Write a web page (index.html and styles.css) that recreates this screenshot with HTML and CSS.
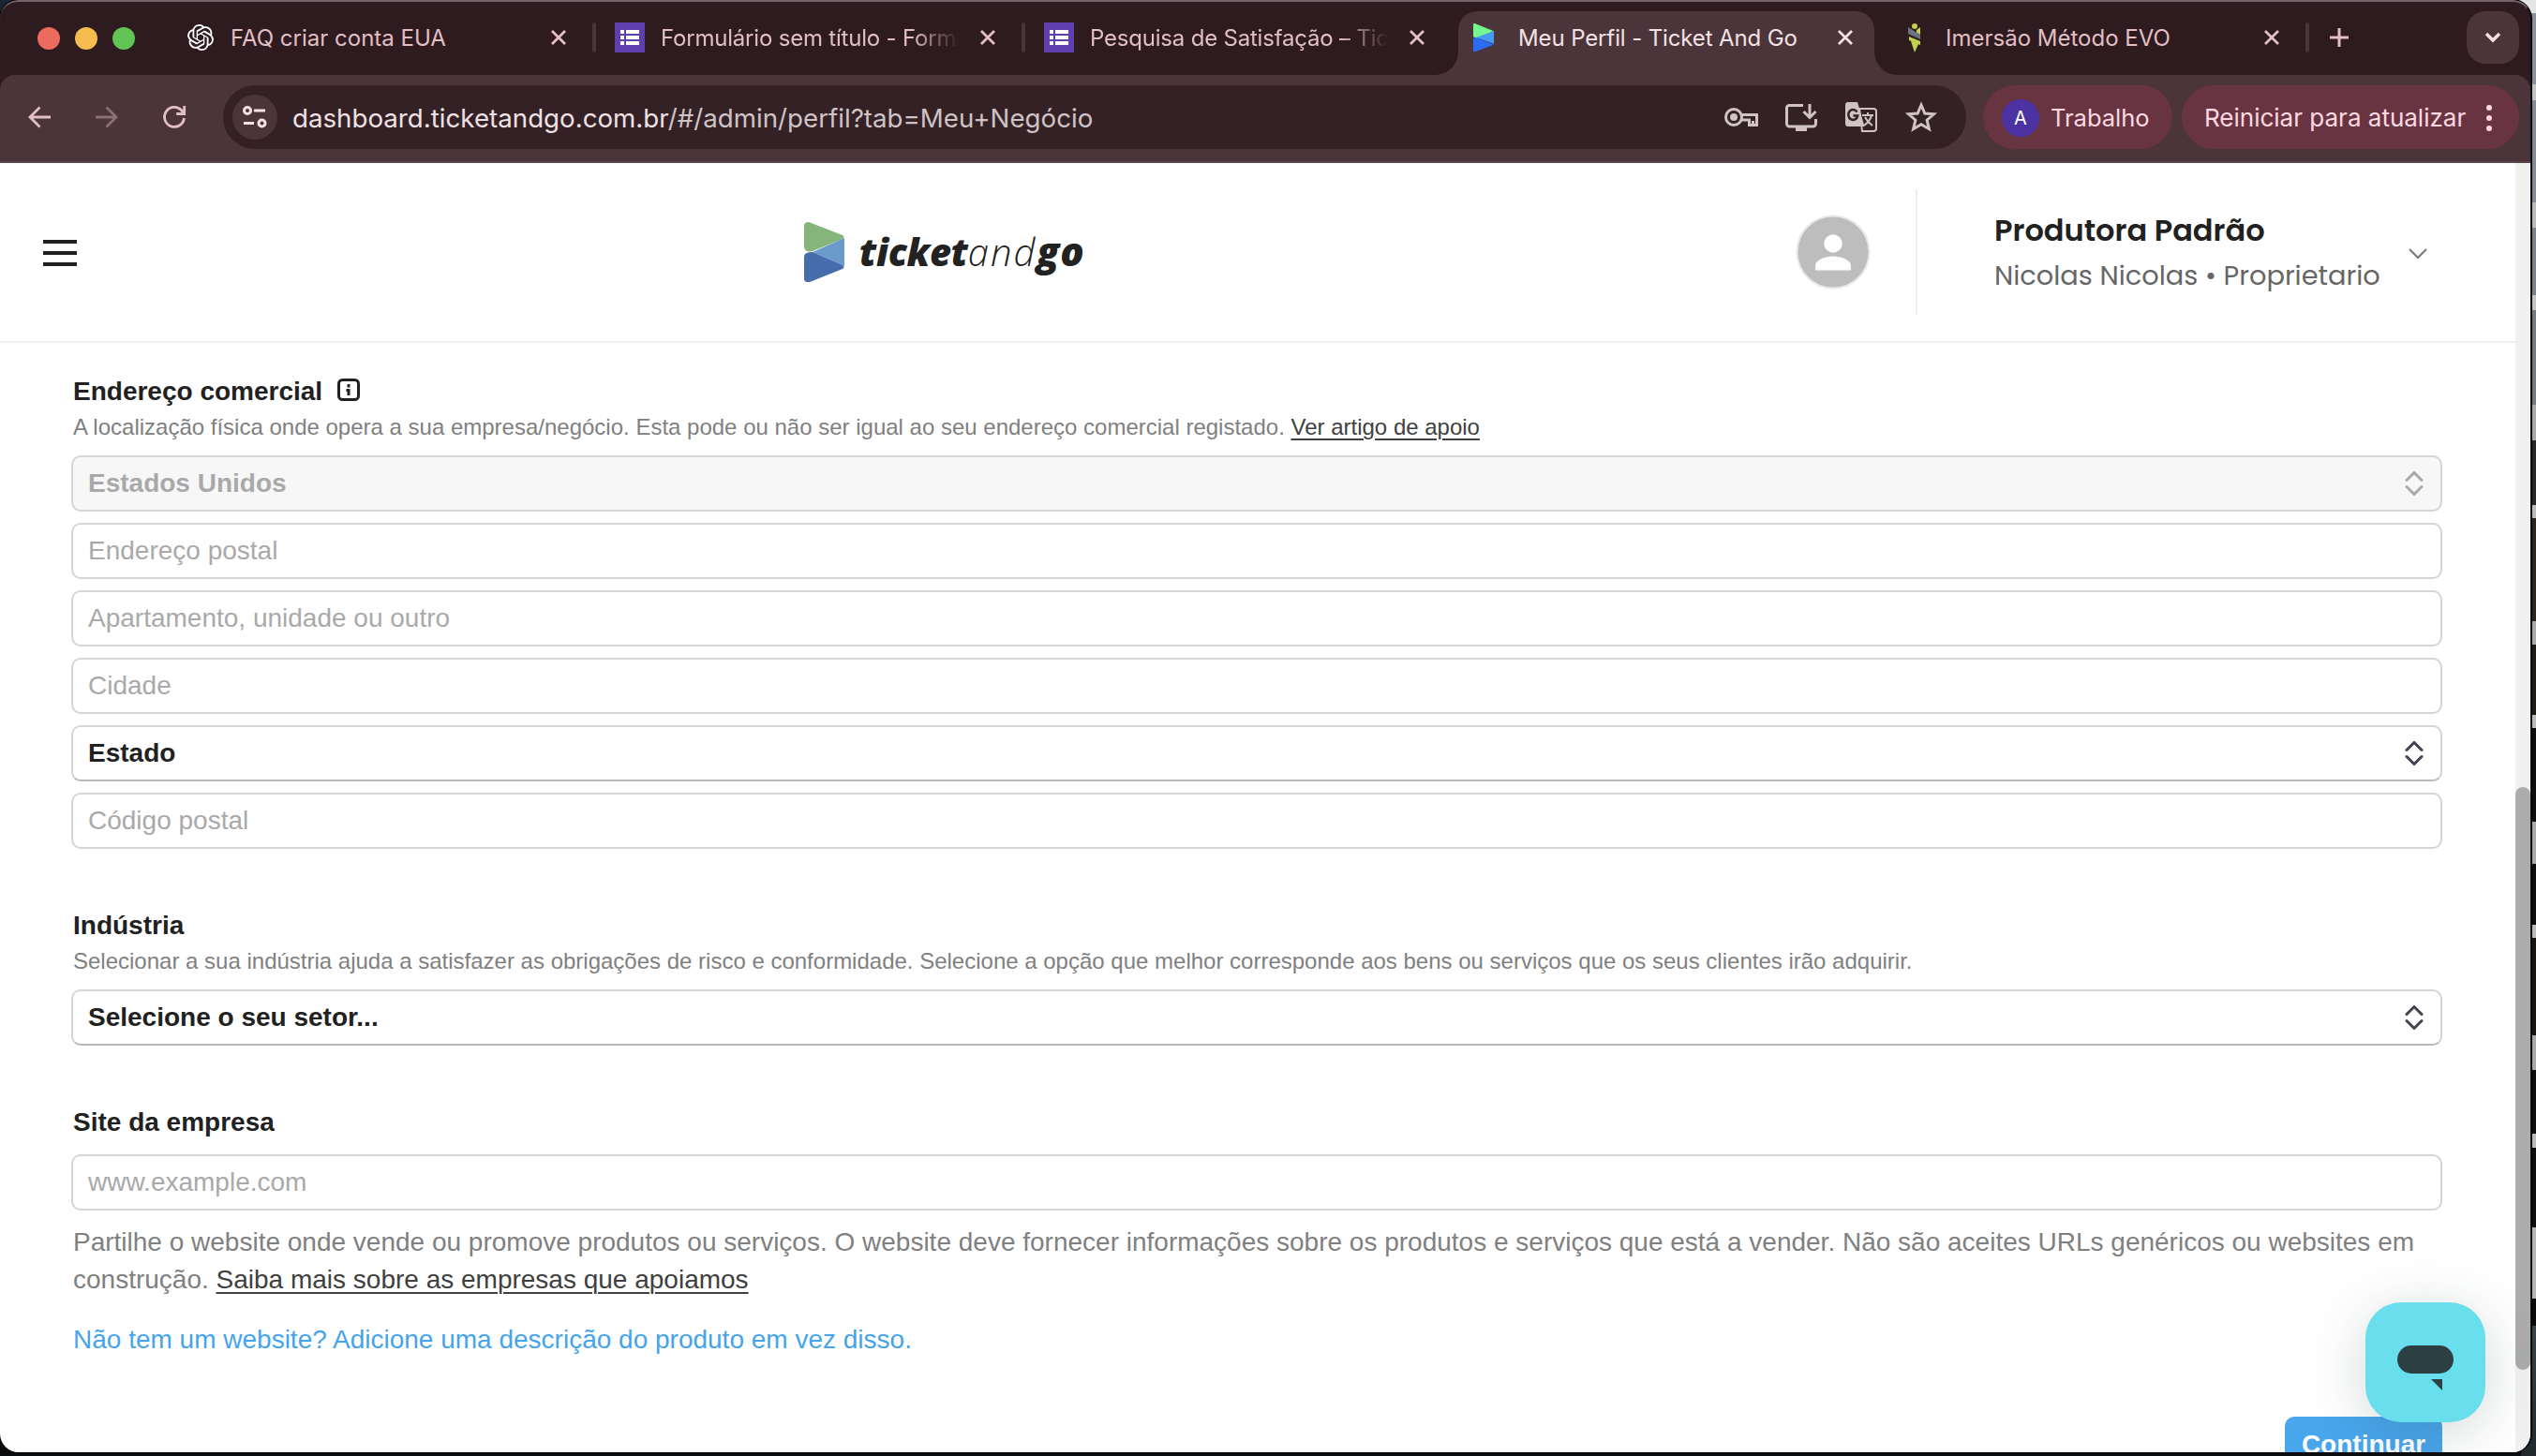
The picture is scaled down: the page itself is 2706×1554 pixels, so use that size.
FILE: index.html
```html
<!doctype html>
<html lang="pt-BR">
<head>
    <meta charset="UTF-8">
    <title>Meu Perfil - Ticket And Go</title>
    <link rel="stylesheet" href="styles.css">
</head>
<body>
<div class="window">
    <div class="tabs">
        <div class="lights"><i class="red"></i><i class="yellow"></i><i class="green"></i></div>
        <div class="tab first">
            <svg class="fav" viewBox="0 0 24 24"><path d="M22.28 9.82a5.98 5.98 0 0 0-.51-4.91 6.05 6.05 0 0 0-6.51-2.9A6.07 6.07 0 0 0 4.98 4.18a5.98 5.98 0 0 0-4 2.9 6.05 6.05 0 0 0 .74 7.1 5.98 5.98 0 0 0 .51 4.91 6.05 6.05 0 0 0 6.51 2.9A5.98 5.98 0 0 0 13.26 24a6.06 6.06 0 0 0 5.77-4.21 5.99 5.99 0 0 0 4-2.9 6.06 6.06 0 0 0-.75-7.07zm-9.02 12.61a4.48 4.48 0 0 1-2.88-1.04l.14-.08 4.78-2.76a.8.8 0 0 0 .39-.68v-6.74l2.02 1.17a.07.07 0 0 1 .04.05v5.58a4.5 4.5 0 0 1-4.49 4.5zM3.6 18.3a4.47 4.47 0 0 1-.54-3.01l.14.08 4.78 2.76a.77.77 0 0 0 .78 0l5.84-3.37v2.33a.08.08 0 0 1-.03.06L9.74 19.95a4.5 4.5 0 0 1-6.14-1.65zM2.34 7.9a4.49 4.49 0 0 1 2.37-1.98v5.68a.77.77 0 0 0 .39.68l5.81 3.35-2.02 1.17a.08.08 0 0 1-.07 0l-4.83-2.79A4.5 4.5 0 0 1 2.34 7.9zm16.6 3.86-5.84-3.39L15.12 7.2a.08.08 0 0 1 .07 0l4.83 2.79a4.49 4.49 0 0 1-.68 8.1v-5.68a.79.79 0 0 0-.4-.65zm2.01-3.03-.14-.08-4.77-2.78a.78.78 0 0 0-.79 0L9.41 9.23V6.9a.07.07 0 0 1 .03-.06l4.83-2.79a4.5 4.5 0 0 1 6.68 4.66zM8.31 12.86l-2.02-1.16a.08.08 0 0 1-.04-.06V6.07a4.5 4.5 0 0 1 7.38-3.45l-.14.08-4.78 2.76a.8.8 0 0 0-.39.68zm1.1-2.36 2.6-1.5 2.6 1.5v3l-2.6 1.5-2.6-1.5z"/></svg>
            <span class="title">FAQ criar conta EUA</span>
            <svg class="close" viewBox="0 0 18 18"><path d="M2 2l14 14M16 2L2 16"/></svg>
        </div>
        <i class="sep"></i>
        <div class="tab">
            <svg class="fav forms" viewBox="0 0 32 32"><path fill="#5f3fad" d="M0 0h32v32H0z"/><path fill="#fff" d="M6 8h4v4H6zM12 8h14v4H12zM6 14h4v4H6zM12 14h14v4H12zM6 20h4v4H6zM12 20h14v4H12z"/></svg>
            <span class="title fade">Formulário sem título - Form</span>
            <svg class="close" viewBox="0 0 18 18"><path d="M2 2l14 14M16 2L2 16"/></svg>
        </div>
        <i class="sep"></i>
        <div class="tab">
            <svg class="fav forms" viewBox="0 0 32 32"><path fill="#5f3fad" d="M0 0h32v32H0z"/><path fill="#fff" d="M6 8h4v4H6zM12 8h14v4H12zM6 14h4v4H6zM12 14h14v4H12zM6 20h4v4H6zM12 20h14v4H12z"/></svg>
            <span class="title fade">Pesquisa de Satisfação – Tic</span>
            <svg class="close" viewBox="0 0 18 18"><path d="M2 2l14 14M16 2L2 16"/></svg>
        </div>
        <div class="tab active">
            <svg class="fav ticket" viewBox="0 0 24 32"><path fill="#74f78e" d="M1 0l22 9L3 17 0 15V1z"/><path fill="#449bf4" d="M23 9v14L3 16z"/><path fill="#2a6df4" d="M3 16l20 8L2 32l-2-1V17z"/></svg>
            <span class="title">Meu Perfil - Ticket And Go</span>
            <svg class="close" viewBox="0 0 18 18"><path d="M2 2l14 14M16 2L2 16"/></svg>
        </div>
        <div class="tab last">
            <svg class="fav evo" viewBox="0 0 16 32"><circle cx="8" cy="4" r="3" fill="#c2d24b"/><path fill="#c2d24b" d="M2 15l12 5v4L2 19zM10 8l4-3v8l-4-2zM4 20l8 3-4 9z"/><path fill="#6e7180" d="M1 5l13 8v5L1 12z"/></svg>
            <span class="title">Imersão Método EVO</span>
            <svg class="close" viewBox="0 0 18 18"><path d="M2 2l14 14M16 2L2 16"/></svg>
        </div>
        <i class="sep"></i>
        <svg class="plus" viewBox="0 0 22 22"><path d="M11 1v20M1 11h20"/></svg>
        <div class="tab-search"><svg viewBox="0 0 18 12"><path d="M2 2l7 7 7-7"/></svg></div>
    </div>

    <div class="toolbar">
        <svg class="nav" viewBox="0 0 24 24"><path d="M24 12H2M12.500 1.500L2 12l10.500 10.500"/></svg>
        <svg class="nav off" viewBox="0 0 24 24"><path d="M0 12h22M11.500 1.500L22 12 11.500 22.500"/></svg>
        <svg class="nav" viewBox="0 0 24 24"><path d="M22.500 13A10.500 10.500 0 1 1 19.500 4.500L22 8M22.700 0v8.500h-8.500"/></svg>
        <div class="omnibox">
            <div class="site"><svg viewBox="0 0 26 24"><circle cx="5" cy="5" r="3.500"/><path d="M12 5h12M1 18.500h11"/><circle cx="20.500" cy="18.500" r="3.500"/></svg></div>
            <span class="url">dashboard.ticketandgo.com.br<em>/#/admin/perfil?tab=Meu+Negócio</em></span>
            <svg class="act" viewBox="0 0 36 36"><circle cx="10" cy="18" r="8.500"/><circle cx="10" cy="18" r="4" fill="#cfc3c5" stroke="none"/><path d="M18 15.500h16.500v11h-8V21h-8M30.500 27v-5"/></svg>
            <svg class="act" viewBox="0 0 36 36"><path d="M20 5.500H5.500A3 3 0 0 0 2.500 8v17a3 3 0 0 0 3 3h25a3 3 0 0 0 3-3v-5M27 4v14M20.500 12l6.500 6.500 6.500-6.500"/><path d="M12 28h12v5H12z" fill="#cfc3c5" stroke="none"/></svg>
            <svg class="act" viewBox="0 0 36 36"><path d="M16 9h15a3 3 0 0 1 3 3v18a3 3 0 0 1-3 3H19z" stroke-width="2"/><path d="M4 2h10l7.500 26H4a3 3 0 0 1-3-3V5a3 3 0 0 1 3-3z" fill="#cfc3c5" stroke="none"/><path d="M13.500 12.500a5 5.500 0 1 0 .7 4H9.500" stroke="#342125" stroke-width="2.500"/><path d="M19 16h12M25 13v3M29 16c-1 5-4 8-8 11M22 18c2 4 5 7 8 9" stroke-width="2"/></svg>
            <svg class="act" viewBox="0 0 36 36"><path d="M18 5l3.800 9 9.700.8-7.400 6.400 2.300 9.500L18 25.700l-8.400 5 2.300-9.500-7.400-6.400 9.700-.8z"/></svg>
        </div>
        <div class="pill profile"><b>A</b>Trabalho</div>
        <div class="pill update">Reiniciar para atualizar<span class="dots"><i></i><i></i><i></i></span></div>
    </div>

    <div class="page">
        <div class="content">
            <header class="header">
                <div class="burger"><i></i><i></i><i></i></div>
                <div class="logo">
                    <svg viewBox="0 0 43 64"><path fill="#85b57a" d="M5 0l36 14q3 2 0 4L9 31q-9 2-9-5V4q0-4 5-4z"/><path fill="#6a9bcb" d="M43 17v30L9 32z"/><path fill="#456cab" d="M9 32l32 14q3 2 0 4L6 64q-6 1-6-4V37q0-5 9-5z"/></svg>
                    <div class="brand"><b>ticket</b><span>and</span><b class="go">go</b></div>
                </div>
                <svg class="avatar" viewBox="0 0 80 80"><circle cx="40" cy="40" r="38.500" fill="#bdbdbd" stroke="#e8e8e8" stroke-width="2"/><circle cx="40" cy="31" r="9.700" fill="#fff"/><path fill="#fff" d="M21 59.500v-5c0-6 11-10 19-10s19 4 19 10v5z"/></svg>
                <div class="account">
                    <div class="who">
                        <strong>Produtora Padrão</strong>
                        <p>Nicolas Nicolas • Proprietario</p>
                    </div>
                    <svg viewBox="0 0 20 12"><path d="M1 1l9 9 9-9"/></svg>
                </div>
            </header>

            <main class="form">
                <h4>Endereço comercial
                    <svg class="info" viewBox="0 0 24 24"><rect x="1.500" y="1.500" width="21" height="21" rx="4"/><path d="M12 6v3.500M9.500 12.500H12V18"/></svg>
                </h4>
                <p class="hint">A localização física onde opera a sua empresa/negócio. Esta pode ou não ser igual ao seu endereço comercial registado. <a>Ver artigo de apoio</a></p>
                <div class="fields">
                    <div class="field select disabled">Estados Unidos<svg viewBox="0 0 20 26"><path d="M2 9.500l8-8 8 8M2 16.500l8 8 8-8"/></svg></div>
                    <div class="field">Endereço postal</div>
                    <div class="field">Apartamento, unidade ou outro</div>
                    <div class="field">Cidade</div>
                    <div class="field select">Estado<svg viewBox="0 0 20 26"><path d="M2 9.500l8-8 8 8M2 16.500l8 8 8-8"/></svg></div>
                    <div class="field">Código postal</div>
                </div>

                <h4 class="industry">Indústria</h4>
                <p class="hint">Selecionar a sua indústria ajuda a satisfazer as obrigações de risco e conformidade. Selecione a opção que melhor corresponde aos bens ou serviços que os seus clientes irão adquirir.</p>
                <div class="field select">Selecione o seu setor...<svg viewBox="0 0 20 26"><path d="M2 9.500l8-8 8 8M2 16.500l8 8 8-8"/></svg></div>

                <h4 class="website">Site da empresa</h4>
                <div class="field">www.example.com</div>
                <p class="note">Partilhe o website onde vende ou promove produtos ou serviços. O website deve fornecer informações sobre os produtos e serviços que está a vender. Não são aceites URLs genéricos ou websites em<br>construção. <a>Saiba mais sobre as empresas que apoiamos</a></p>
                <p class="no-site">Não tem um website? Adicione uma descrição do produto em vez disso.</p>
                <div class="continue">Continuar</div>
            </main>
        </div>
        <div class="scrollbar"><div class="thumb"></div></div>
    </div>
    <div class="chat"><svg viewBox="0 0 128 128"><rect x="34" y="46" width="60" height="30" rx="15"/><path d="M70 82h12v12z"/></svg></div>
</div>
</body>
</html>
```

FILE: styles.css
```css
*{
    box-sizing: border-box;
}
body{
    margin:0;
    width:2706px;
    height:1554px;
    overflow: hidden;
    /* desktop behind the window */
    background:
        linear-gradient(90deg, #1c2433 2600px, transparent 0) 0 0 / 100% 30px no-repeat,
        linear-gradient(90deg, #0a0c0d 2690px, transparent 0) 0 100% / 100% 1400px no-repeat,
        linear-gradient(#e4e4e4 0, #e4e4e4 14px, #8b929c 14px, #8b929c 90px, #c4c4c4 90px, #c4c4c4 107px,
            #858c95 107px, #858c95 216px, #bbb 216px, #bbb 243px, #7b8289 243px, #7b8289 315px,
            #c4c4c4 315px, #c4c4c4 331px, #747b80 331px, #747b80 432px, #a9a9a9 432px, #a9a9a9 470px,
            #262626 470px, #262626 539px, #bbb 539px, #bbb 553px, #2b261d 553px, #2b261d 663px,
            #a9a9a9 663px, #a9a9a9 688px, #1e1b15 688px, #1e1b15 763px, #bbb 763px, #bbb 777px,
            #0d0d0d 777px, #0d0d0d 877px, #a9a9a9 877px, #a9a9a9 922px, #0d0d0d 922px, #0d0d0d 987px,
            #bbb 987px, #bbb 1001px, #15140f 1001px, #15140f 1105px, #a9a9a9 1105px, #a9a9a9 1142px,
            #0d0d0d 1142px, #0d0d0d 1210px, #bbb 1210px, #bbb 1225px, #0d0d0d 1225px, #0d0d0d 1310px,
            #b5b5b5 1310px, #b5b5b5 1386px, #0a0a0a 1386px, #0a0a0a 1415px, #38444a 1415px, #20282b 1554px);
    font-family: "Liberation Sans", Arial, sans-serif;
}
svg{
    display: block;
    flex:none;
    fill:none;
}
p,h4{
    margin:0;
}
.window{
    position: relative;
    width:2701px;
    height:1550px;
    overflow: hidden;
    border-top:2px solid #746368;
    border-right:1px solid #111;
    border-radius:20px;
    background-color: #2d1b1f;
    box-shadow: 0 0 0 1px #000;
}

/* tabs */
.tabs{
    display: flex;
    align-items: center;
    height:78px;
    padding-left:40px;
    font: 24px Inter, "Noto Sans", sans-serif;
    color:#e2bfc5;
}
.lights{
    display: flex;
    gap:16px;
    width:160px;
}
.lights i{
    width:24px;
    height:24px;
    border-radius:50%;
}
.red{
    background-color: #ed6a5e;
}
.yellow{
    background-color: #f5bd4f;
}
.green{
    background-color: #61c454;
}
.tab{
    display: flex;
    align-items: center;
    width:454px;
    height:68px;
    padding:0 27px 2px 20px;
}
.tab.first{
    width:432px;
    padding-left:0;
}
.fav{
    width:28px;
    height:28px;
    margin-right:18px;
    fill:#fff;
}
.forms{
    width:32px;
    height:32px;
    margin-right:17px;
}
.title{
    flex:1;
    overflow: hidden;
    white-space: nowrap;
    margin-right:22px;
}
.fade{
    letter-spacing:-.2px;
    -webkit-mask-image: linear-gradient(90deg, #000 84%, transparent);
    mask-image: linear-gradient(90deg, #000 84%, transparent);
}
.close{
    width:18px;
    height:18px;
    stroke:#e2bfc5;
    stroke-width:2.8;
}
.sep{
    width:4px;
    height:32px;
    margin-top:-2px;
    border-radius:2px;
    background-color: #4b343a;
}
.tab.active{
    position: relative;
    width:444px;
    height:68px;
    margin:10px 0 0 8px;
    padding:0 22px 12px 16px;
    border-radius:20px 20px 0 0;
    background-color: #4b343a;
    color:#f3e2e5;
}
.tab.active .title{
    letter-spacing:-.12px;
}
.tab.active:before,.tab.active:after{
    content:"";
    position: absolute;
    bottom:0;
    width:24px;
    height:24px;
}
.tab.active:before{
    left:-24px;
    background: radial-gradient(circle at 0 0, transparent 23.500px, #4b343a 24px);
}
.tab.active:after{
    right:-24px;
    background: radial-gradient(circle at 100% 0, transparent 23.500px, #4b343a 24px);
}
.tab.active .close{
    stroke:#f3e2e5;
}
.ticket{
    width:23px;
    height:32px;
    margin-right:25px;
}
.tab.last{
    width:460px;
    padding:0 27px 2px 35px;
}
.evo{
    width:16px;
    height:32px;
    margin-right:25px;
}
.plus{
    width:22px;
    margin:-2px 0 0 21px;
    stroke:#e2bfc5;
    stroke-width:3;
}
.tab-search{
    display: flex;
    align-items: center;
    justify-content: center;
    width:56px;
    height:56px;
    margin:-2px 0 0 125px;
    border-radius:20px;
    background-color: #4b343a;
}
.tab-search svg{
    width:18px;
    stroke:#f3e2e5;
    stroke-width:3.4;
}

/* toolbar */
.toolbar{
    display: flex;
    align-items: center;
    height:94px;
    padding:0 12px 2px 30px;
    border-bottom:2px solid #574549;
    border-radius:16px 16px 0 0;
    background-color: #4b343a;
    font: 26px Inter, "Noto Sans", sans-serif;
    color:#ffd9e0;
}
.nav{
    width:24px;
    height:24px;
    margin-right:48px;
    overflow: visible;
    stroke:#e2bfc5;
    stroke-width:2.8;
}
.nav.off{
    stroke:#8b7177;
}
.omnibox{
    display: flex;
    align-items: center;
    width:1860px;
    height:68px;
    margin-left:-8px;
    padding:0 30px 0 10px;
    border-radius:34px;
    background-color: #342125;
}
.site{
    display: flex;
    align-items: center;
    justify-content: center;
    width:48px;
    height:48px;
    border-radius:50%;
    background-color: #4b343a;
}
.site svg{
    width:26px;
    stroke:#f3e2e5;
    stroke-width:3;
}
.url{
    flex:1;
    margin-left:16px;
    padding-top:1px;
    font-size:27.700px;
    color:#f0e2e4;
}
.url em{
    font-style: normal;
    color:#cfc3c5;
}
.act{
    width:36px;
    height:36px;
    margin-left:28px;
    stroke:#cfc3c5;
    stroke-width:3;
}
.pill{
    display: flex;
    align-items: center;
    height:68px;
    padding-top:1px;
    border-radius:34px;
    background-color: #693442;
    white-space: nowrap;
}
.profile{
    width:202px;
    margin:0 10px 0 18px;
    padding-left:20px;
    font-size:25.500px;
}
.profile b{
    width:40px;
    height:40px;
    margin-right:12px;
    border-radius:50%;
    background-color: #4b33a3;
    color:#fff;
    font-size:20px;
    font-weight:400;
    line-height:40px;
    text-align: center;
}
.update{
    width:360px;
    padding-left:24px;
}
.dots{
    display: flex;
    flex-direction: column;
    gap:5px;
    margin-left:22px;
}
.dots i{
    width:6px;
    height:6px;
    border-radius:50%;
    background-color: #ffd9e0;
}

/* page */
.page{
    display: flex;
    height:1376px;
    background-color: #fff;
}
.content{
    width:2684px;
    overflow: hidden;
}
.scrollbar{
    width:16px;
    padding-top:666px;
    background-color: #f0f0f0;
}
.thumb{
    height:622px;
    border-radius:8px;
    background-color: #acacac;
}
.header{
    display: flex;
    align-items: center;
    height:192px;
    padding-left:46px;
    border-bottom:2px solid #eee;
}
.burger{
    display: flex;
    flex-direction: column;
    gap:8px;
    width:812px;
    padding-top:2px;
}
.burger i{
    width:36px;
    height:4px;
    background-color: #212121;
}
.logo{
    display: flex;
    width:1058px;
}
.logo svg{
    width:43px;
    height:64px;
    margin-right:16px;
}
.brand{
    font: italic 40px/62px "Open Sans", sans-serif;
    color:#222;
    white-space: nowrap;
}
.brand b{
    font-weight:800;
    letter-spacing:-.3px;
}
.brand span{
    font-weight:300;
    letter-spacing:2px;
}
.brand .go{
    font-size:42px;
    letter-spacing:1px;
}
.avatar{
    width:80px;
    height:80px;
}
.account{
    display: flex;
    align-items: center;
    height:134px;
    margin-left:48px;
    padding-left:82px;
    border-left:2px solid #eee;
}
.who{
    width:442px;
    padding-top:2px;
    font-family: Poppins, Inter, sans-serif;
    white-space: nowrap;
}
.who strong{
    display: block;
    font-size:32px;
    font-weight:600;
    line-height:49px;
    color:#212121;
}
.who p{
    font-size:28.800px;
    line-height:49px;
    color:#666;
}
.account svg{
    width:20px;
    margin-top:3px;
    stroke:#777;
    stroke-width:2;
}

/* form */
.form{
    padding:34px 78px 0 76px;
    font-size:28px;
    color:#212121;
}
h4{
    display: flex;
    align-items: center;
    height:36px;
    padding-left:2px;
    font-size:28px;
}
.info{
    width:24px;
    height:24px;
    margin:-4px 0 0 16px;
    stroke:#212121;
    stroke-width:3;
}
.hint{
    height:50px;
    padding-left:2px;
    font-size:24px;
    line-height:39px;
    color:#808080;
    white-space: nowrap;
}
.form a{
    color:#404040;
    text-decoration: underline;
    text-decoration-thickness:2px;
    text-underline-offset:4px;
}
.fields{
    display: flex;
    flex-direction: column;
    gap:12px;
}
.field{
    display: flex;
    align-items: center;
    justify-content: space-between;
    height:60px;
    padding:0 18px 0 16px;
    border:2px solid #d5d5d5;
    border-radius:10px;
    color:#a9a9a9;
}
.select{
    border-bottom-color:#b8b8b8;
    color:#212121;
    font-weight:bold;
}
.select svg{
    width:20px;
    height:26px;
    stroke:#404452;
    stroke-width:3;
    stroke-linecap: round;
    stroke-linejoin: round;
}
.disabled{
    border-color:#d5d5d5;
    background-color: #f7f7f7;
    color:#a9a9a9;
}
.disabled svg{
    stroke:#a9a9a9;
}
.industry{
    margin-top:64px;
}
.website{
    margin-top:64px;
    margin-bottom:16px;
}
.note{
    margin-top:14px;
    padding-left:2px;
    line-height:40px;
    color:#808080;
    white-space: nowrap;
}
.no-site{
    margin-top:24px;
    padding-left:2px;
    line-height:40px;
    color:#46a4ec;
}
.continue{
    width:168px;
    height:60px;
    margin:62px 0 0 auto;
    border-radius:10px;
    background-color: #49a6ec;
    color:#fff;
    font-weight:bold;
    line-height:60px;
    text-align: center;
}
.chat{
    position: absolute;
    left:2524px;
    top:1388px;
    width:128px;
    height:128px;
    border-radius:38px;
    background-color: #69deec;
    box-shadow: 0 10px 60px rgba(35,60,65,.2);
}
.chat svg{
    fill:#2c3f42;
}
```
